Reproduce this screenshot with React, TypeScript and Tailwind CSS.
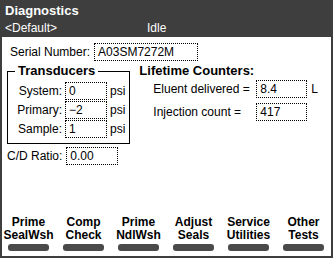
import React from "react";

const font = "font-['Liberation_Sans','DejaVu_Sans',sans-serif]";

const softKeys = [
  ["Prime", "SealWsh"],
  ["Comp", "Check"],
  ["Prime", "NdlWsh"],
  ["Adjust", "Seals"],
  ["Service", "Utilities"],
  ["Other", "Tests"],
];

const transducers = [
  { label: "System:", value: "0" },
  { label: "Primary:", value: "\u22122" },
  { label: "Sample:", value: "1" },
];

const Field = ({ value, className }: { value: string; className: string }) => (
  <div
    className={`h-[18px] border border-dotted border-black pl-[3px] text-[12px] leading-[17px] ${className}`}
  >
    {value}
  </div>
);

export default function App() {
  return (
    <div className={`w-[333px] h-[258px] flex flex-col bg-white text-black ${font}`}>
      {/* Title bar */}
      <header className="h-[37px] bg-[#3e3e3e] text-white px-[5px] pt-[3px] shrink-0">
        <div className="text-[13px] font-bold leading-[16px]">Diagnostics</div>
        <div className="flex text-[12px] leading-[15px] mt-[2px]">
          <span className="w-[142px]">&lt;Default&gt;</span>
          <span>Idle</span>
        </div>
      </header>

      <main className="flex-1 flex flex-col border-x-2 border-b-2 border-[#3e3e3e] text-[12px]">
        {/* Serial number */}
        <div className="flex items-center mt-[6px] ml-[8px] gap-[4px]">
          <span>Serial Number:</span>
          <Field value="A03SM7272M" className="w-[104px]" />
        </div>

        <div className="flex mt-[3px]">
          {/* Transducers group */}
          <fieldset className="ml-[5px] w-[121px] h-[80px] border border-black px-[4px] pb-[3px]">
            <legend className="ml-[3px] px-[3px] text-[13px] font-bold leading-[14px]">Transducers</legend>
            <div className="flex flex-col gap-[1px] mt-[4px]">
              {transducers.map((t) => (
                <div key={t.label} className="flex items-center">
                  <span className="w-[53px] text-right pr-[3px]">{t.label}</span>
                  <Field value={t.value} className="w-[42px]" />
                  <span className="ml-[3px]">psi</span>
                </div>
              ))}
            </div>
          </fieldset>

          {/* Lifetime counters */}
          <div className="ml-[9px] flex flex-col">
            <div className="text-[13px] font-bold leading-[14px]">Lifetime Counters:</div>
            <div className="flex flex-col gap-[5px] mt-[2px] ml-[14px]">
              <div className="flex items-center">
                <span className="w-[103px]">Eluent delivered =</span>
                <Field value="8.4" className="w-[51px]" />
                <span className="ml-[4px]">L</span>
              </div>
              <div className="flex items-center">
                <span className="w-[103px]">Injection count =</span>
                <Field value="417" className="w-[51px]" />
              </div>
            </div>
          </div>
        </div>

        {/* C/D ratio */}
        <div className="flex items-center mt-[3px] ml-[5px] gap-[4px]">
          <span>C/D Ratio:</span>
          <Field value="0.00" className="w-[52px]" />
        </div>

        {/* Soft keys */}
        <div className="mt-auto mb-[5px] ml-[6px] grid grid-cols-[repeat(6,55px)]">
          {softKeys.map(([a, b]) => (
            <div key={a + b} className="flex flex-col items-center w-[41px]">
              <span className="text-[12px] font-bold leading-[13px] whitespace-nowrap">{a}</span>
              <span className="text-[12px] font-bold leading-[13px] whitespace-nowrap">{b}</span>
              <div className="mt-[2px] w-[41px] h-[7px] rounded-[3px] bg-[#4a4a4a]" />
            </div>
          ))}
        </div>
      </main>
    </div>
  );
}
